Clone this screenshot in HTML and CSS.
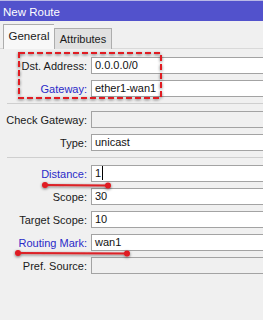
FILE: index.html
```html
<!DOCTYPE html>
<html>
<head>
<meta charset="utf-8">
<link rel="stylesheet" href="styles.css">
</head>
<body>
<div class="window">
  <div class="titlebar">New Route</div>
  <div class="tabs">
    <div class="tab active">General</div>
    <div class="tab">Attributes</div>
  </div>
  <div class="panel">
    <div class="group first">
      <div class="row"><span class="label">Dst. Address:</span><span class="field">0.0.0.0/0</span></div>
      <div class="row"><span class="label link">Gateway:</span><span class="field">ether1-wan1</span></div>
    </div>
    <div class="sep"></div>
    <div class="group">
      <div class="row"><span class="label">Check Gateway:</span><span class="field disabled"></span></div>
      <div class="row"><span class="label">Type:</span><span class="field">unicast</span></div>
    </div>
    <div class="sep"></div>
    <div class="group">
      <div class="row"><span class="label link">Distance:</span><span class="field">1<span class="caret"></span></span></div>
      <div class="row"><span class="label">Scope:</span><span class="field">30</span></div>
      <div class="row"><span class="label">Target Scope:</span><span class="field">10</span></div>
      <div class="row"><span class="label link">Routing Mark:</span><span class="field">wan1</span></div>
      <div class="row"><span class="label">Pref. Source:</span><span class="field disabled"></span></div>
    </div>
  </div>
  <svg class="marks" width="263" height="320" viewBox="0 0 263 320">
    <defs>
      <filter id="sh" x="-20%" y="-50%" width="140%" height="300%">
        <feGaussianBlur in="SourceAlpha" stdDeviation="1.5"/>
        <feOffset dx="0" dy="1" result="b"/>
        <feComponentTransfer><feFuncA type="linear" slope="0.55"/></feComponentTransfer>
        <feMerge><feMergeNode/><feMergeNode in="SourceGraphic"/></feMerge>
      </filter>
    </defs>
    <rect x="19" y="53" width="142" height="45" fill="none" stroke="#e01a22" stroke-width="2" stroke-dasharray="6 3" filter="url(#sh)"/>
    <g filter="url(#sh)">
      <line x1="45" y1="185" x2="108" y2="185.5" stroke="#dc2026" stroke-width="2"/>
      <circle cx="45" cy="185" r="3" fill="#e01a22"/>
      <circle cx="108" cy="185.5" r="3" fill="#e01a22"/>
      <line x1="18" y1="253" x2="127" y2="253.5" stroke="#dc2026" stroke-width="2"/>
      <circle cx="18" cy="253" r="3" fill="#e01a22"/>
      <circle cx="127" cy="253.5" r="3" fill="#e01a22"/>
    </g>
  </svg>
</div>
</body>
</html>
```
FILE: styles.css
```css
html, body {
  margin: 0;
  padding: 0;
}
body {
  background: #f0f0f0;
  font-family: "Liberation Sans", Arial, sans-serif;
  font-size: 11px;
  color: #1a1a1a;
  overflow: hidden;
}
.window {
  position: relative;
  width: 263px;
  height: 320px;
  overflow: hidden;
  background: #f0f0f0;
}
.titlebar {
  height: 21px;
  box-sizing: border-box;
  border-top: 1px solid #b9b9e6;
  background: #5252cc;
  color: #ffffff;
  font-size: 11.5px;
  line-height: 22px;
  padding-left: 3px;
}
.tabs {
  display: flex;
  align-items: flex-end;
  height: 28px;
  padding-left: 3px;
  box-sizing: border-box;
  border-bottom: 1px solid #d9d9d9;
}
.tab {
  box-sizing: border-box;
  height: 21px;
  padding: 0 4px;
  border: 1px solid #adadad;
  border-bottom: none;
  background: #e1e1e1;
  line-height: 20px;
  margin-bottom: -1px;
  width: 58px;
  text-align: center;
}
.tab.active {
  height: 25px;
  width: 51px;
  background: #f8f8f8;
  line-height: 22px;
  font-size: 11.5px;
  border-right: none;
  position: relative;
  z-index: 1;
}
.panel {
  padding-top: 8px;
}
.group {
  display: flex;
  flex-direction: column;
  gap: 6px;
}
.row {
  display: flex;
  align-items: center;
  height: 17px;
}
.label {
  width: 87px;
  text-align: right;
  flex: none;
  white-space: nowrap;
  color: #1a1a1a;
  font-size: 11px;
}
.label.link {
  color: #2a2ac8;
}
.field {
  margin-left: 4px;
  width: 200px;
  flex: none;
  height: 17px;
  box-sizing: border-box;
  border: 1px solid #a3a3a3;
  background: #ffffff;
  padding-left: 3px;
  line-height: 15px;
  font-size: 11px;
  color: #111;
  position: relative;
}
.field.disabled {
  background: #f0f0f0;
}
.caret {
  display: inline-block;
  width: 1px;
  height: 14px;
  background: #000;
  vertical-align: top;
  margin-left: 1px;
}
.sep {
  height: 1px;
  background: #cfcfcf;
  margin: 6px 0 7px 7px;
}
.marks {
  position: absolute;
  left: 0;
  top: 0;
  pointer-events: none;
}
```
